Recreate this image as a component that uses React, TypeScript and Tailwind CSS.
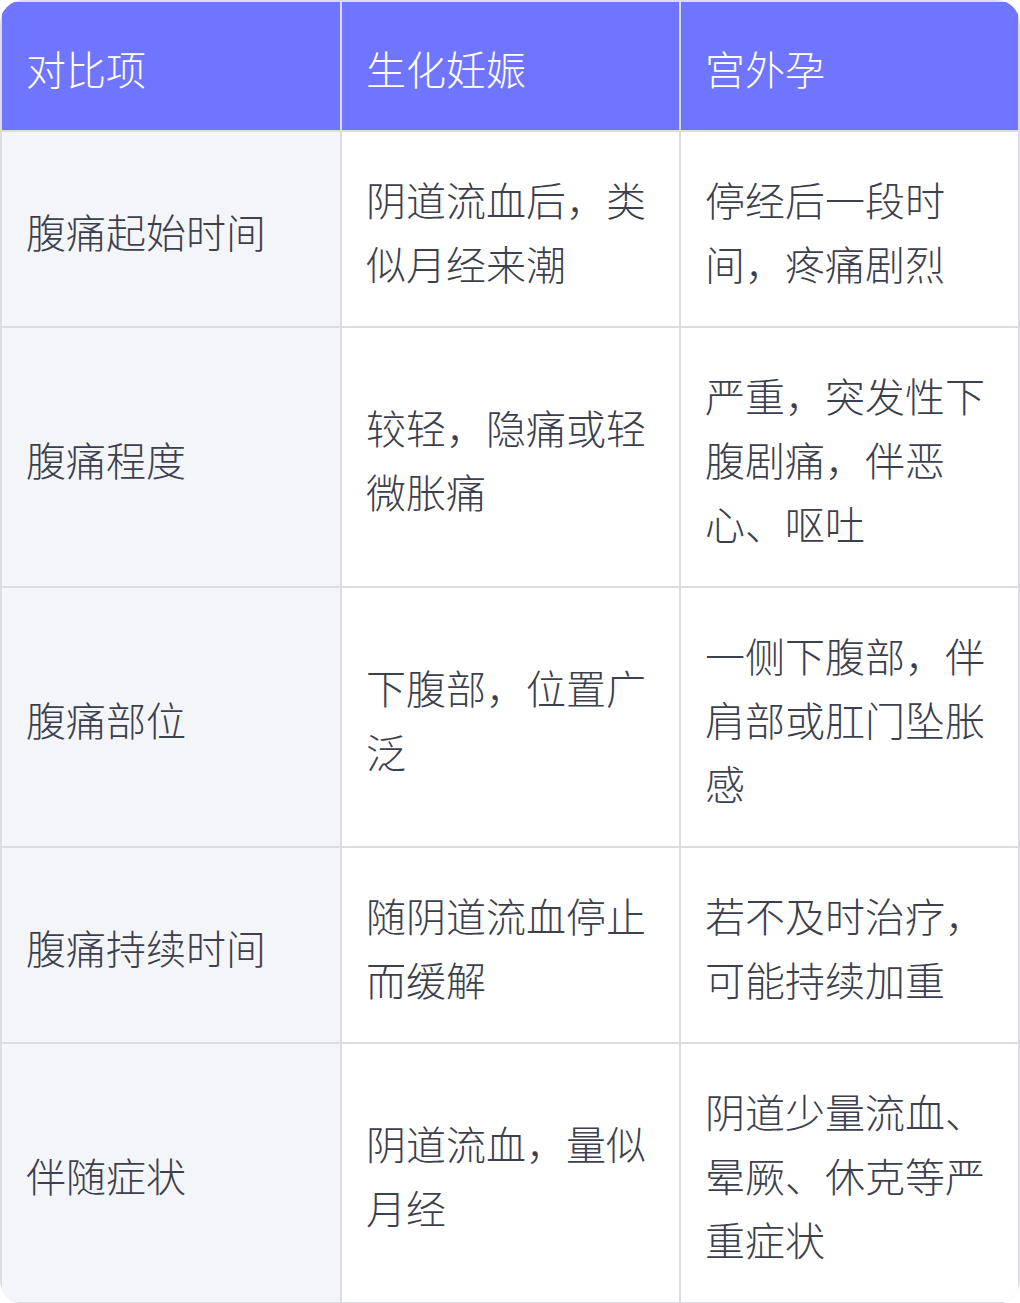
import React from 'react';

type Row = { label: string; chemical: string; ectopic: string };

const rows: Row[] = [
  { label: '腹痛起始时间', chemical: '阴道流血后，类似月经来潮', ectopic: '停经后一段时间，疼痛剧烈' },
  { label: '腹痛程度', chemical: '较轻，隐痛或轻微胀痛', ectopic: '严重，突发性下腹剧痛，伴恶心、呕吐' },
  { label: '腹痛部位', chemical: '下腹部，位置广泛', ectopic: '一侧下腹部，伴肩部或肛门坠胀感' },
  { label: '腹痛持续时间', chemical: '随阴道流血停止而缓解', ectopic: '若不及时治疗，可能持续加重' },
  { label: '伴随症状', chemical: '阴道流血，量似月经', ectopic: '阴道少量流血、晕厥、休克等严重症状' },
];

const font = { fontFamily: '"Noto Sans CJK SC", "Noto Sans", sans-serif' };

export default function App() {
  return (
    <div className="w-[1020px] bg-white" style={font}>
      <div className="grid grid-cols-[338px_337px_337px] gap-[2px] p-[2px] bg-[#dcdde2] rounded-[24px] overflow-hidden text-[40px] leading-[64px] font-light">
        {['对比项', '生化妊娠', '宫外孕'].map((h) => (
          <div key={h} className="bg-[#7075ff] text-white px-6 pt-[34px] pb-[30px] flex items-center">
            {h}
          </div>
        ))}
        {rows.map((r) => (
          <React.Fragment key={r.label}>
            <div className="bg-[#f4f5f9] text-[#3c404d] px-6 pt-[35px] pb-[31px] flex items-center">{r.label}</div>
            <div className="bg-white text-[#3c404d] px-6 pt-[35px] pb-[31px] flex items-center">{r.chemical}</div>
            <div className="bg-white text-[#3c404d] px-6 pt-[35px] pb-[31px] flex items-center">{r.ectopic}</div>
          </React.Fragment>
        ))}
      </div>
    </div>
  );
}
